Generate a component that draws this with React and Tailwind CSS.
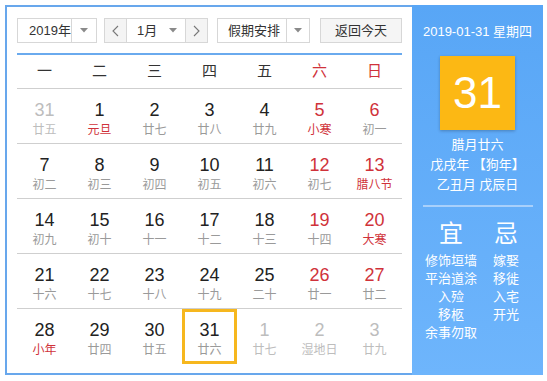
import React from "react";

const RED = "text-[#d0323a]";

const rows = [
  [
    { n: "31", l: "廿五", dim: true },
    { n: "1", l: "元旦", lr: true },
    { n: "2", l: "廿七" },
    { n: "3", l: "廿八" },
    { n: "4", l: "廿九" },
    { n: "5", l: "小寒", nr: true, lr: true },
    { n: "6", l: "初一", nr: true },
  ],
  [
    { n: "7", l: "初二" },
    { n: "8", l: "初三" },
    { n: "9", l: "初四" },
    { n: "10", l: "初五" },
    { n: "11", l: "初六" },
    { n: "12", l: "初七", nr: true },
    { n: "13", l: "腊八节", nr: true, lr: true },
  ],
  [
    { n: "14", l: "初九" },
    { n: "15", l: "初十" },
    { n: "16", l: "十一" },
    { n: "17", l: "十二" },
    { n: "18", l: "十三" },
    { n: "19", l: "十四", nr: true },
    { n: "20", l: "大寒", nr: true, lr: true },
  ],
  [
    { n: "21", l: "十六" },
    { n: "22", l: "十七" },
    { n: "23", l: "十八" },
    { n: "24", l: "十九" },
    { n: "25", l: "二十" },
    { n: "26", l: "廿一", nr: true },
    { n: "27", l: "廿二", nr: true },
  ],
  [
    { n: "28", l: "小年", lr: true },
    { n: "29", l: "廿四" },
    { n: "30", l: "廿五" },
    { n: "31", l: "廿六", today: true },
    { n: "1", l: "廿七", dim: true },
    { n: "2", l: "湿地日", dim: true },
    { n: "3", l: "廿九", dim: true },
  ],
];

function Caret() {
  return (
    <svg width="8" height="5" viewBox="0 0 8 5">
      <path d="M0 0 L8 0 L4 4.5 Z" fill="#8a8a8a" />
    </svg>
  );
}

function Chevron({ dir }) {
  return (
    <svg width="7" height="12" viewBox="0 0 7 12">
      <path
        d={dir === "left" ? "M6 1 L1 6 L6 11" : "M1 1 L6 6 L1 11"}
        fill="none"
        stroke="#777"
        strokeWidth="1.1"
      />
    </svg>
  );
}

function Cell({ c }) {
  let numCls = "text-[#222]";
  let lunCls = "text-[#9a9a9a]";
  if (c.dim) {
    numCls = "text-[#bdbdbd]";
    lunCls = "text-[#bdbdbd]";
  } else {
    if (c.nr) numCls = RED;
    if (c.lr) lunCls = RED;
  }
  return (
    <div
      className={
        "flex flex-col items-center pt-[11px] " +
        (c.today ? "ring-[3px] ring-inset ring-[#f6b71e]" : "")
      }
    >
      <div className={"text-[18px] leading-[20px] " + numCls}>{c.n}</div>
      <div className={"text-[12px] leading-[18px] mt-[1px] " + lunCls}>{c.l}</div>
    </div>
  );
}

export default function App() {
  return (
    <div className="w-[547px] h-[381px] bg-white font-['Liberation_Sans','Noto_Sans_CJK_SC',sans-serif] pt-[5px] pl-[5px]">
      <div className="flex h-[370px]">
        {/* left part */}
        <div className="w-[407px] h-full border-l-2 border-t-2 border-b-2 border-[#68a7ec] pl-[10px] pt-[11px]">
          <div className="w-[385px]">
            {/* controls */}
            <div className="flex items-center h-[25px] text-[13px] text-[#333]">
              <div className="flex w-[80px] h-[25px] border border-[#d7d7d7]">
                <div className="flex-1 flex items-center pl-[11px]">2019年</div>
                <div className="w-[25px] border-l border-[#d7d7d7] flex items-center justify-center">
                  <Caret />
                </div>
              </div>
              <div className="flex w-[104px] h-[25px] border border-[#d7d7d7] ml-[7px]">
                <div className="w-[22px] bg-[#f4f4f4] border-r border-[#d7d7d7] flex items-center justify-center">
                  <Chevron dir="left" />
                </div>
                <div className="flex-1 flex items-center pl-[10px] pr-[8px] justify-between">
                  <span>1月</span>
                  <Caret />
                </div>
                <div className="w-[22px] bg-[#f4f4f4] border-l border-[#d7d7d7] flex items-center justify-center">
                  <Chevron dir="right" />
                </div>
              </div>
              <div className="flex w-[93px] h-[25px] border border-[#d7d7d7] ml-[9px]">
                <div className="flex-1 flex items-center pl-[10px]">假期安排</div>
                <div className="w-[23px] border-l border-[#d7d7d7] flex items-center justify-center">
                  <Caret />
                </div>
              </div>
              <div className="w-[82px] h-[25px] border border-[#d7d7d7] bg-[#f5f5f5] ml-[10px] flex items-center justify-center">
                返回今天
              </div>
            </div>

            {/* calendar */}
            <div className="mt-[10px] border-t-2 border-[#6aaaee]">
              <div className="grid grid-cols-7 h-[34px] border-b border-[#cfcfcf] text-[15px]">
                {["一", "二", "三", "四", "五", "六", "日"].map((d, i) => (
                  <div
                    key={d}
                    className={
                      "flex items-center justify-center " +
                      (i >= 5 ? RED : "text-[#333]")
                    }
                  >
                    {d}
                  </div>
                ))}
              </div>
              {rows.map((r, ri) => (
                <div
                  key={ri}
                  className={
                    "grid grid-cols-7 h-[55px] " +
                    (ri < 4 ? "border-b border-[#cfcfcf]" : "")
                  }
                >
                  {r.map((c, ci) => (
                    <Cell key={ci} c={c} />
                  ))}
                </div>
              ))}
            </div>
          </div>
        </div>

        {/* right panel */}
        <div className="w-[131px] h-full bg-linear-to-b from-[#58a6f6] to-[#6eb5fc] flex flex-col items-center text-white pt-[18px]">
          <div className="text-[13px] leading-[18px]">2019-01-31 星期四</div>
          <div className="mt-[15px] w-[75px] h-[74px] bg-[#fcb814] shadow-[0_1px_3px_rgba(0,0,0,0.25)] flex items-center justify-center text-[44px] leading-none">
            31
          </div>
          <div className="mt-[5px] flex flex-col items-center text-[13px] leading-[20px]">
            <div>腊月廿六</div>
            <div>戊戌年 【狗年】</div>
            <div>乙丑月 戊辰日</div>
          </div>
          <div className="mt-[10px] w-[110px] h-[2px] bg-[#a8d0fb]" />
          <div className="mt-[12px] w-full flex pl-[9px]">
            <div className="w-[60px] flex flex-col items-center">
              <div className="text-[24px] leading-[30px]">宜</div>
              <div className="mt-[3px] flex flex-col items-center text-[13px] leading-[18px]">
                <div>修饰垣墙</div>
                <div>平治道涂</div>
                <div>入殓</div>
                <div>移柩</div>
                <div>余事勿取</div>
              </div>
            </div>
            <div className="w-[40px] ml-[5px] flex flex-col items-center">
              <div className="text-[24px] leading-[30px]">忌</div>
              <div className="mt-[3px] flex flex-col items-center text-[13px] leading-[18px]">
                <div>嫁娶</div>
                <div>移徙</div>
                <div>入宅</div>
                <div>开光</div>
              </div>
            </div>
          </div>
        </div>
      </div>
    </div>
  );
}
